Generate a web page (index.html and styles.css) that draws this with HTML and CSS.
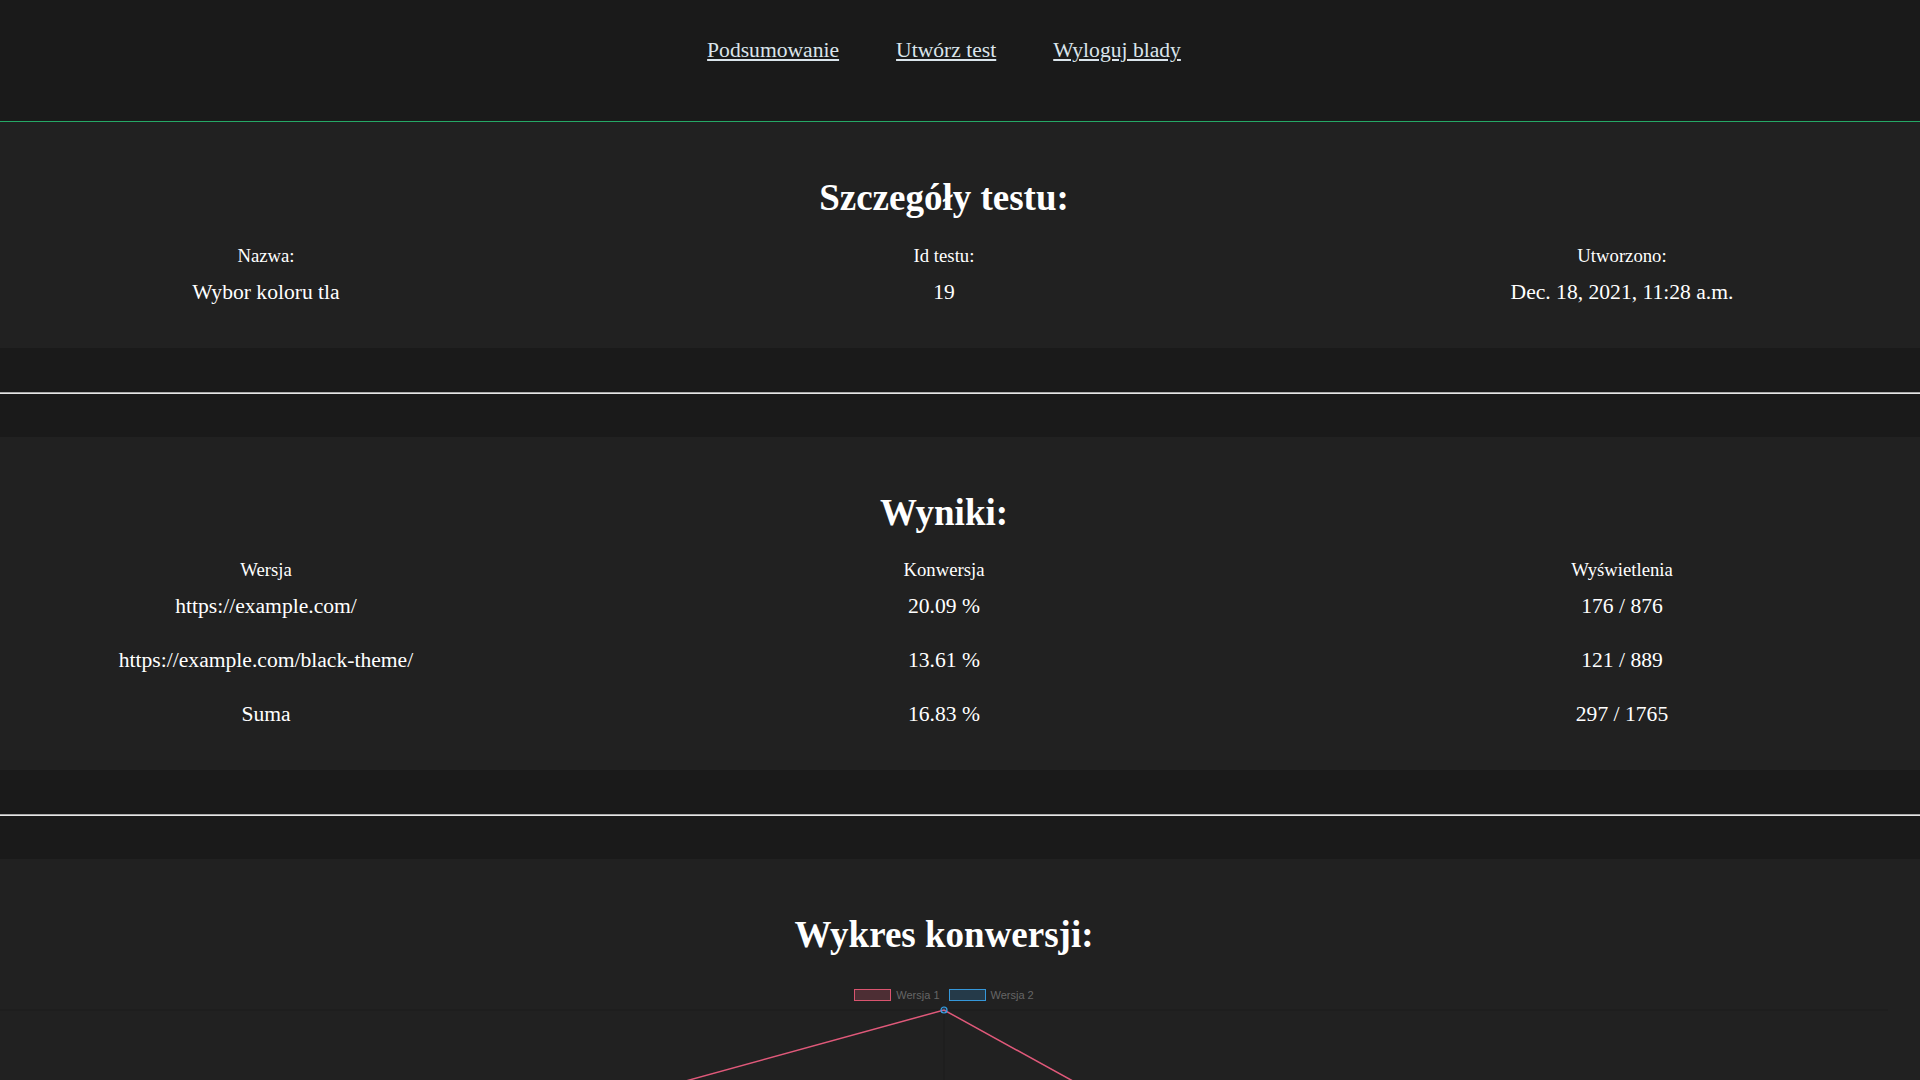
FILE: index.html
```html
<!DOCTYPE html>
<html lang="pl">
<head>
<meta charset="utf-8">
<title>Szczegóły testu</title>
<link rel="stylesheet" href="styles.css">
</head>
<body>
<header class="topbar">
  <nav class="nav">
    <a class="nav-link" href="#">Podsumowanie</a>
    <a class="nav-link" href="#">Utwórz test</a>
    <a class="nav-link" href="#">Wyloguj blady</a>
  </nav>
</header>
<main>
  <section class="panel">
    <h2 class="panel-title">Szczegóły testu:</h2>
    <div class="grid-row head">
      <div>Nazwa:</div>
      <div>Id testu:</div>
      <div>Utworzono:</div>
    </div>
    <div class="grid-row data">
      <div>Wybor koloru tla</div>
      <div>19</div>
      <div>Dec. 18, 2021, 11:28 a.m.</div>
    </div>
  </section>
  <hr class="divider">
  <section class="panel">
    <h2 class="panel-title">Wyniki:</h2>
    <div class="grid-row head">
      <div>Wersja</div>
      <div>Konwersja</div>
      <div>Wyświetlenia</div>
    </div>
    <div class="grid-row data">
      <div>https://example.com/</div>
      <div>20.09 %</div>
      <div>176 / 876</div>
    </div>
    <div class="grid-row data">
      <div>https://example.com/black-theme/</div>
      <div>13.61 %</div>
      <div>121 / 889</div>
    </div>
    <div class="grid-row data">
      <div>Suma</div>
      <div>16.83 %</div>
      <div>297 / 1765</div>
    </div>
  </section>
  <hr class="divider">
  <section class="panel chart-panel">
    <h2 class="panel-title">Wykres konwersji:</h2>
    <div class="legend">
      <span class="legend-item"><span class="legend-box box-red"></span><span class="legend-text">Wersja 1</span></span>
      <span class="legend-item"><span class="legend-box box-blue"></span><span class="legend-text">Wersja 2</span></span>
    </div>
    <svg class="chart" width="1888" height="180" viewBox="0 0 1888 180" xmlns="http://www.w3.org/2000/svg">
      <line x1="0" y1="9" x2="1888" y2="9" stroke="#1d1d1d" stroke-width="1"/>
      <line x1="944" y1="9" x2="944" y2="180" stroke="#1d1d1d" stroke-width="1"/>
      <polyline points="321,180 944,9 1254,180" fill="none" stroke="#e0597a" stroke-width="1.5"/>
      <circle cx="944" cy="9" r="3" fill="rgba(54,162,235,0.2)" stroke="#36a2eb" stroke-width="1.2"/>
    </svg>
  </section>
</main>
</body>
</html>
```
FILE: styles.css
```css
* {
  box-sizing: border-box;
}

body {
  margin: 0;
  background: #1a1a1a;
  color: #ffffff;
  font-family: "Liberation Serif", "Times New Roman", serif;
}

.topbar {
  height: 122px;
  padding: 38px 32px 0 0;
  border-bottom: 1px solid #25a866;
}

.nav {
  display: flex;
  justify-content: center;
  gap: 57px;
}

.nav-link {
  font-size: 21.6px;
  line-height: 24px;
  color: #dbe5ec;
  text-decoration: underline;
}

.panel {
  background: #212121;
  padding: 55px 32px 44px 0;
}

.panel-title {
  margin: 0;
  font-size: 37px;
  line-height: 41px;
  font-weight: bold;
  text-align: center;
}

.grid-row {
  display: grid;
  grid-template-columns: repeat(3, 1fr);
  column-gap: 146px;
  text-align: center;
}

.grid-row.head {
  margin-top: 26.5px;
  font-size: 18.72px;
  line-height: 21px;
}

.grid-row.data {
  margin-top: 30px;
  font-size: 21.6px;
  line-height: 24px;
}

.grid-row.head + .grid-row.data {
  margin-top: 14px;
}

.divider {
  height: 0;
  margin: 44px 0 43px;
  border: 0;
  border-top: 1px solid #a9a9a9;
  border-bottom: 1px solid #e6e6e6;
}

.chart-panel {
  padding-bottom: 0;
}

.legend {
  display: flex;
  justify-content: center;
  gap: 9px;
  margin-top: 34px;
  height: 12px;
  font-family: "Liberation Sans", Arial, sans-serif;
  font-size: 11px;
  line-height: 12px;
  color: #666666;
}

.legend-item {
  display: flex;
  align-items: center;
  gap: 5px;
}

.legend-box {
  display: block;
  width: 37px;
  height: 12px;
  border: 1px solid;
}

.box-red {
  background: rgba(255, 99, 132, 0.2);
  border-color: #d9546f;
}

.box-blue {
  background: rgba(54, 162, 235, 0.2);
  border-color: #3597d9;
}

.chart {
  display: block;
}
```
